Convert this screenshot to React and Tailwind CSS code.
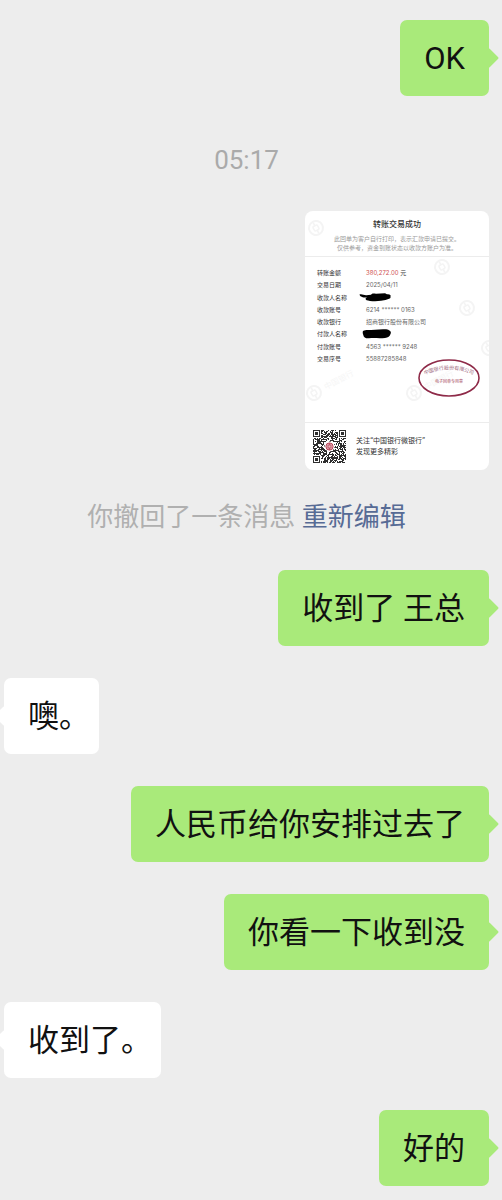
import { useMemo } from "react";
import clsx from "clsx";

const details = [
  { label: "转账金额", amount: "380,272.00", unit: "元" },
  { label: "交易日期", value: "2025/04/11" },
  { label: "收款人名称", mask: "payee" },
  { label: "收款账号", value: "6214 ****** 0163" },
  { label: "收款银行", value: "招商银行股份有限公司" },
  { label: "付款人名称", mask: "payer" },
  { label: "付款账号", value: "4563 ****** 9248" },
  { label: "交易序号", value: "55887285848" },
];

const watermarks = [
  { x: 11, y: 17 },
  { x: 137, y: 56 },
  { x: 162, y: 97 },
  { x: 9, y: 182, text: true },
  { x: 109, y: 182, text: true },
  { x: 184, y: 137 },
];

const QR_SIZE = 33;

function inFinder(x, y) {
  const far = QR_SIZE - 8;
  return (x < 8 && y < 8) || (x >= far && y < 8) || (x < 8 && y >= far);
}

function QrCode() {
  const path = useMemo(() => {
    let seed = 20250411;
    let d = "";
    for (let y = 0; y < QR_SIZE; y++) {
      for (let x = 0; x < QR_SIZE; x++) {
        seed = (seed * 1103515245 + 12345) % 2147483648;
        if (!inFinder(x, y) && seed / 2147483648 > 0.42) {
          d += `M${x} ${y}h1v1h-1z`;
        }
      }
    }
    return d;
  }, []);

  return (
    <svg viewBox="0 0 33 33" className="size-[33px] shrink-0" role="img" aria-label="二维码">
      <path d={path} fill="#2e2e2e" />
      {[[0, 0], [26, 0], [0, 26]].map(([x, y]) => (
        <g key={`${x}-${y}`}>
          <rect x={x + 0.5} y={y + 0.5} width="6" height="6" fill="#fff" stroke="#2e2e2e" />
          <rect x={x + 2} y={y + 2} width="3" height="3" fill="#2e2e2e" />
        </g>
      ))}
      <circle cx="16.5" cy="16.5" r="5" fill="#fff" />
      <circle cx="16.5" cy="16.5" r="3.6" fill="#e9b9c0" stroke="#b8455a" strokeWidth="1" />
      <rect x="15" y="15" width="3" height="3" fill="none" stroke="#b8455a" strokeWidth="0.8" />
      <path d="M16.5 13v2M16.5 18v2" stroke="#b8455a" strokeWidth="0.8" />
    </svg>
  );
}

function Watermark() {
  return (
    <svg viewBox="0 0 184 259" className="absolute inset-0 size-full" aria-hidden="true">
      {watermarks.map(({ x, y, text }) => (
        <g key={`${x}-${y}`} transform={`translate(${x} ${y}) rotate(-28)`} fill="none" stroke="#f4f4f4">
          <circle r="7" strokeWidth="2" />
          <rect x="-2.5" y="-2.5" width="5" height="5" rx="1" strokeWidth="1.5" />
          <path d="M0 -6v3M0 3v3" strokeWidth="1.5" />
          {text && (
            <text x="12" y="3" fontSize="8" fill="#f6f6f6" stroke="none">
              中国银行
            </text>
          )}
        </g>
      ))}
    </svg>
  );
}

function Mask({ type }) {
  if (type === "payee") {
    return (
      <svg viewBox="0 0 36 12" className="-ml-2 h-3 w-9" role="img" aria-label="已遮盖">
        <path
          d="M1.500 2.500C4 1.500 6 3.500 8.500 3.200L13 2.800C14 1 16 1.600 18 1.700L27 1.300C28 1.500 28 2.200 29 2.300C32 2 33 3 32.500 4.500C33 6.500 31 7 29 7.500C27 8.500 25 8 23 8.800C19 9.500 15 9.300 12 9C9 8.500 7.500 8 7.500 6.500L9 5.500C6 5.800 2 5 1.500 2.500Z"
          fill="#000"
        />
      </svg>
    );
  }
  return (
    <svg viewBox="0 0 36 12" className="-ml-2 h-3 w-9" role="img" aria-label="已遮盖">
      <path
        d="M5 3C8 1.500 10 2.300 13 2L25 1.300C28 1 30 1.500 31 2.200C33 3 33.300 4.500 32.500 6C32 8.500 30 9.500 27 10C21 10.500 16 9.800 11 10.300C8 10.600 5.500 9.500 5.300 7C5 6 4.300 4.500 5 3Z"
        fill="#000"
      />
    </svg>
  );
}

function Stamp() {
  return (
    <svg viewBox="0 0 64 40" className="absolute right-2 bottom-[72px] h-10 w-16">
      <defs>
        <path id="stamp-arc" d="M5 18Q32 5 59 18" />
      </defs>
      <ellipse cx="32" cy="20" rx="30" ry="18" fill="none" stroke="#8e2a48" strokeWidth="1.6" />
      <text fontSize="5" fill="#a06a80" textAnchor="middle">
        <textPath href="#stamp-arc" startOffset="50%">
          中国银行股份有限公司
        </textPath>
      </text>
      <text x="32" y="25" fontSize="4" fill="#a84a62" textAnchor="middle">
        电子回单专用章
      </text>
    </svg>
  );
}

function Receipt() {
  return (
    <article className="relative w-[184px] self-end overflow-hidden rounded-lg bg-white font-[Inter,'Noto_Sans_CJK_SC',sans-serif] text-[6px] leading-3">
      <Watermark />
      <div className="relative">
        <header className="border-b border-[#ececec] pt-[7px] pb-1 text-center">
          <h2 className="text-[8px] leading-3 font-medium text-[#333]">转账交易成功</h2>
          <p className="pt-1 leading-[9px] text-[#999]">
            此回单为客户自行打印，表示汇款申请已提交。
            <br />
            仅供参考，资金到账状态以收款方账户为准。
          </p>
        </header>
        <div className="h-[165px] px-3 pt-[10px]">
          <dl className="grid h-[98px] content-between">
            {details.map((item) => (
              <div key={item.label} className="flex">
                <dt className="w-12 text-[#333]">{item.label}</dt>
                <dd className="pl-px text-[#666]">
                  {item.mask && <Mask type={item.mask} />}
                  {item.amount && (
                    <>
                      <span className="text-[#d0514f]">{item.amount}</span>{" "}
                      <span className="text-[#333]">{item.unit}</span>
                    </>
                  )}
                  {item.value}
                </dd>
              </div>
            ))}
          </dl>
        </div>
        <footer className="flex gap-[10px] border-t border-[#ececec] px-2 py-[7px] text-[7px] leading-[11px] text-[#333]">
          <QrCode />
          <p className="pt-[5px]">
            关注“中国银行微银行”
            <br />
            发现更多精彩
          </p>
        </footer>
      </div>
      <Stamp />
    </article>
  );
}

function Bubble({ mine, children }) {
  return (
    <div
      className={clsx(
        "relative rounded-[7px] px-6 pt-[19px] pb-[17px] text-[31px] leading-10 text-[#111]",
        mine ? "self-end bg-[#a9ea7a]" : "self-start bg-white"
      )}
    >
      <span
        className={clsx(
          "absolute top-[31px] size-[14px] rotate-45 rounded-[1px]",
          mine ? "-right-[7px] bg-[#a9ea7a]" : "-left-[7px] bg-white"
        )}
      />
      <p className="relative [font-feature-settings:'halt']">{children}</p>
    </div>
  );
}

export default function App() {
  return (
    <main className="flex min-h-screen flex-col gap-8 overflow-hidden bg-[#ededed] pt-5 pr-[13px] pb-[14px] pl-1 font-[Roboto,'Noto_Sans_CJK_SC',sans-serif]">
      <Bubble mine>OK</Bubble>
      <time className="pt-[13px] text-center text-[26px] leading-[38px] text-[#aaa]">05:17</time>
      <Receipt />
      <p className="pb-[6px] text-center text-[26px] leading-[30px] text-[#b0b0b0]">
        你撤回了一条消息{" "}
        <a href="#edit" className="text-[#576b95]">
          重新编辑
        </a>
      </p>
      <Bubble mine>收到了 王总</Bubble>
      <Bubble>噢。</Bubble>
      <Bubble mine>人民币给你安排过去了</Bubble>
      <Bubble mine>你看一下收到没</Bubble>
      <Bubble>收到了。</Bubble>
      <Bubble mine>好的</Bubble>
    </main>
  );
}
